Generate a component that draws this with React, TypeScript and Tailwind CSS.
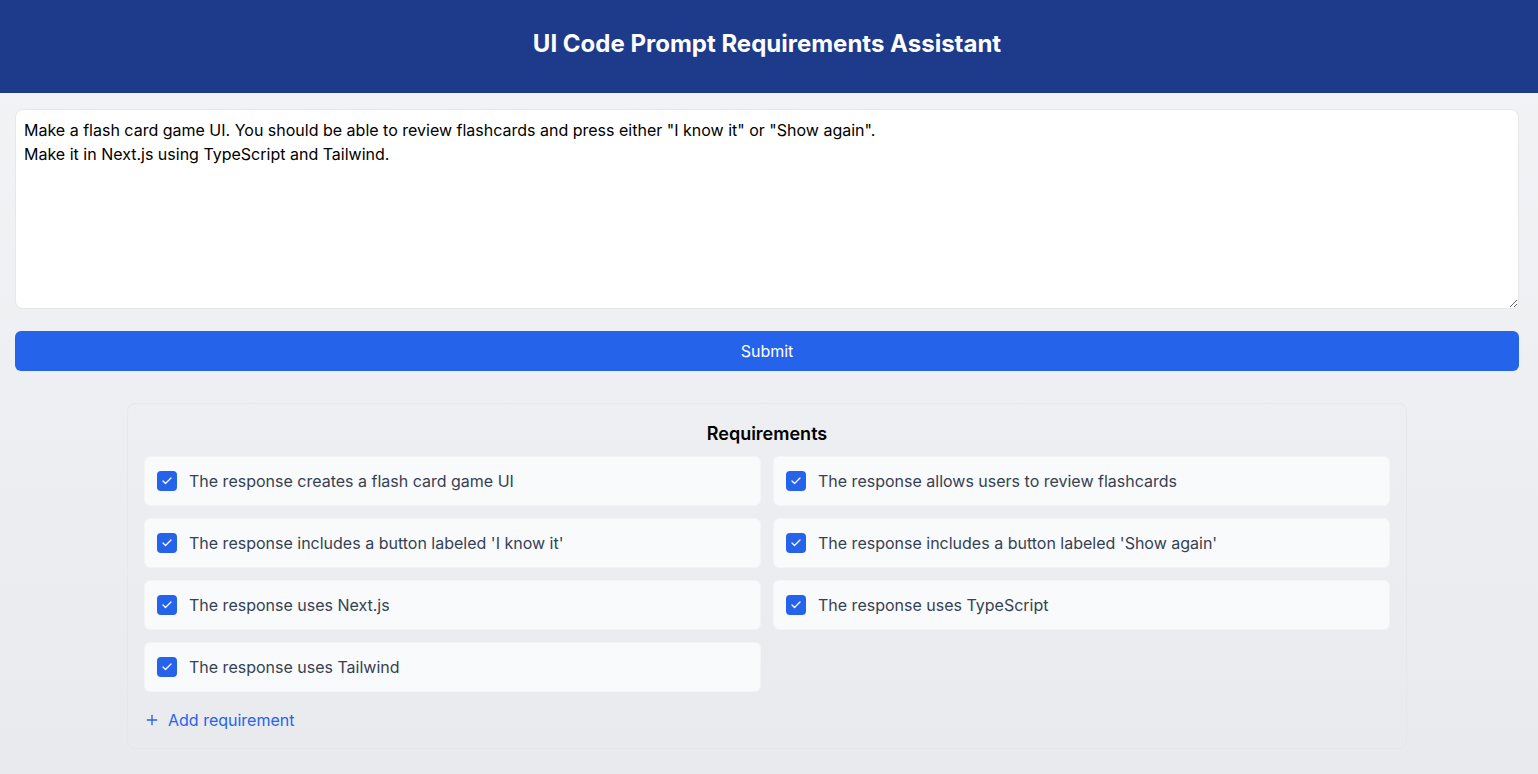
import { useState } from "react";
import { Check, Plus } from "lucide-react";

const initialRequirements = [
  "The response creates a flash card game UI",
  "The response allows users to review flashcards",
  "The response includes a button labeled 'I know it'",
  "The response includes a button labeled 'Show again'",
  "The response uses Next.js",
  "The response uses TypeScript",
  "The response uses Tailwind",
];

export default function App() {
  const [prompt, setPrompt] = useState(
    'Make a flash card game UI. You should be able to review flashcards and press either "I know it" or "Show again".\nMake it in Next.js using TypeScript and Tailwind.'
  );
  const [checked, setChecked] = useState<boolean[]>(
    initialRequirements.map(() => true)
  );

  return (
    <div
      className="min-h-screen flex flex-col bg-linear-to-b from-gray-100 to-[#e9eaee]"
      style={{ fontFamily: "Inter, 'Noto Sans', sans-serif" }}
    >
      <header className="bg-[#1e3a8a] h-[93px] pt-[28px] pr-1 text-center">
        <h1 className="text-2xl font-bold text-white">
          UI Code Prompt Requirements Assistant
        </h1>
      </header>

      <main className="pl-[15px] pr-[19px] pt-4 pb-6">
        <textarea
          value={prompt}
          onChange={(e) => setPrompt(e.target.value)}
          className="block w-full h-[200px] p-2 bg-white border border-gray-200 rounded-lg text-base leading-6 text-black outline-none"
        />

        <button className="mt-[22px] w-full h-10 bg-[#2563eb] text-white text-base rounded-md">
          Submit
        </button>

        <section className="mt-8 max-w-7xl mx-auto border border-gray-200 rounded-lg p-4">
          <h2 className="text-lg font-semibold text-black text-center mb-2">
            Requirements
          </h2>
          <div className="grid grid-cols-2 gap-3">
            {initialRequirements.map((req, i) => (
              <label
                key={req}
                className="flex items-center gap-3 p-3 bg-gray-50 border border-gray-100 rounded-md cursor-pointer"
              >
                <button
                  type="button"
                  onClick={() =>
                    setChecked((c) => c.map((v, j) => (j === i ? !v : v)))
                  }
                  className={`w-5 h-5 rounded flex items-center justify-center shrink-0 ${
                    checked[i] ? "bg-[#2563eb]" : "bg-white border border-gray-300"
                  }`}
                >
                  {checked[i] && (
                    <Check className="w-3 h-3 text-white" strokeWidth={2.5} />
                  )}
                </button>
                <span className="text-base leading-6 text-gray-700">{req}</span>
              </label>
            ))}
          </div>
          <button className="mt-4 flex items-center gap-2 text-[#2563eb] text-base leading-6">
            <Plus className="w-4 h-4" strokeWidth={2} />
            Add requirement
          </button>
        </section>
      </main>
    </div>
  );
}
